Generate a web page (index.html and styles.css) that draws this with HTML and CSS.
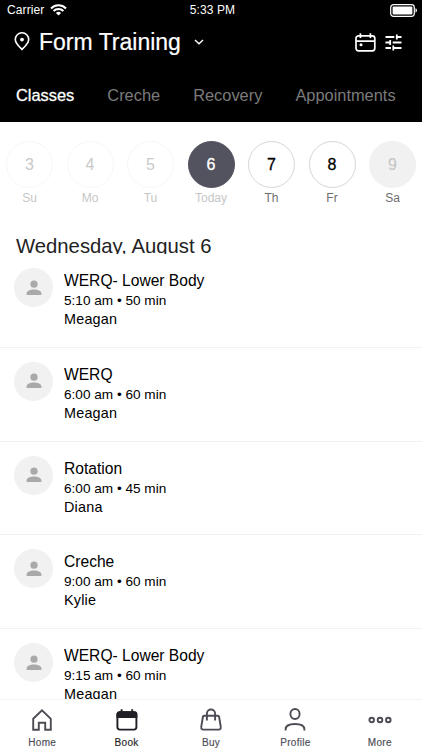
FILE: index.html
```html
<!DOCTYPE html>
<html lang="en">
<head>
    <meta charset="UTF-8">
    <meta name="viewport" content="width=device-width, initial-scale=1.0">
    <title>Form Training</title>
    <link rel="stylesheet" href="styles.css">
</head>
<body>

    <header class="header">
        <div class="status-bar">
            <div class="carrier">
                <span>Carrier</span>
                <svg width="17" height="12" viewBox="0 0 17 12" fill="none" stroke="#fff" stroke-width="2.1">
                    <path d="M1 4.4a10.6 10.6 0 0 1 15 0"/>
                    <path d="M3.6 7.1a6.9 6.9 0 0 1 9.8 0"/>
                    <path d="M8.5 11.6L5.9 9a3.7 3.7 0 0 1 5.2 0z" fill="#fff" stroke="none"/>
                </svg>
            </div>
            <span class="time">5:33 PM</span>
            <svg class="battery" width="28" height="13" viewBox="0 0 28 13">
                <rect x="0.7" y="0.7" width="23.6" height="11.6" rx="2.8" fill="none" stroke="#fff" stroke-width="1.2"/>
                <rect x="2.6" y="2.6" width="19.8" height="7.8" rx="1" fill="#fff"/>
                <path d="M25.5 4.3c1.9.4 1.9 4 0 4.400z" fill="#fff"/>
            </svg>
        </div>

        <div class="title-bar">
            <svg class="pin" width="16" height="19" viewBox="0 0 16 19" fill="none" stroke="#fff" stroke-width="1.6">
                <path d="M8 17.4C5 14.5 1.3 11.3 1.3 7.5a6.7 6.7 0 0 1 13.4 0C14.7 11.3 11 14.5 8 17.4z"/>
                <circle cx="8" cy="7.6" r="1.9" fill="#fff" stroke="none"/>
            </svg>
            <h1>Form Training</h1>
            <svg class="chevron" width="10" height="6" viewBox="0 0 10 6" fill="none" stroke="#fff" stroke-width="1.4">
                <path d="M1 1l4 3.8L9 1"/>
            </svg>
            <div class="actions">
                <svg width="21" height="19" viewBox="0 0 21 19" fill="none" stroke="#fff" stroke-width="1.7">
                    <rect x="1" y="2.8" width="18.8" height="15" rx="2.5"/>
                    <path d="M1 8.2h18.8M5.4 0.3v4.600M15.400 0.3v4.6"/>
                    <circle cx="6" cy="11.8" r="1.5" fill="#fff" stroke="none"/>
                </svg>
                <svg width="17" height="17" viewBox="0 0 17 17" fill="none" stroke="#fff" stroke-width="1.8">
                    <path d="M0.5 3h8.8M11.8 3h4.700M11.8 0.4v5.2M0.5 8.5h4.700M7.7 8.5h8.8M5.2 5.9v5.2M0.5 14h5.5M8.3 14h8.2M8.3 11.4v5.200"/>
                </svg>
            </div>
        </div>

        <nav class="tabs">
            <span class="tab active">Classes</span>
            <span class="tab">Creche</span>
            <span class="tab">Recovery</span>
            <span class="tab">Appointments</span>
        </nav>
    </header>

    <section class="week">
        <div class="day past"><b>3</b><span>Su</span></div>
        <div class="day past"><b>4</b><span>Mo</span></div>
        <div class="day past"><b>5</b><span>Tu</span></div>
        <div class="day today"><b>6</b><span>Today</span></div>
        <div class="day"><b>7</b><span>Th</span></div>
        <div class="day"><b>8</b><span>Fr</span></div>
        <div class="day closed"><b>9</b><span>Sa</span></div>
    </section>

    <main class="schedule">
        <h2>Wednesday, August 6</h2>
        <div id="class-list"></div>
    </main>

    <nav class="bottom-nav">
        <div class="nav-item">
            <svg width="24" height="24" viewBox="0 0 24 24">
                <path d="M3.2 10.8L12 2.400l8.800 8.400v11h-5.600v-7H8.800v7H3.200z"/>
            </svg>
            <span>Home</span>
        </div>
        <div class="nav-item active">
            <svg width="24" height="24" viewBox="0 0 24 24">
                <rect x="2.4" y="4.2" width="19" height="17.4" rx="2.5"/>
                <path d="M2.4 9V6.500a2.300 2.300 0 0 1 2.300-2.300h14.400a2.300 2.300 0 0 1 2.300 2.300V9z" fill="#1f1f25"/>
                <path d="M6.6 1.2v3M17.2 1.2v3"/>
            </svg>
            <span>Book</span>
        </div>
        <div class="nav-item">
            <svg width="24" height="24" viewBox="0 0 24 24">
                <path d="M5.300 7.700h13.400a1.400 1.400 0 0 1 1.400 1.100l1.700 10.400a2 2 0 0 1-2 2.400H4.200a2 2 0 0 1-2-2.400L3.900 8.800a1.400 1.400 0 0 1 1.400-1.100z"/>
                <path d="M7.900 12.500V5.600a4.100 4.100 0 0 1 8.200 0v6.900"/>
            </svg>
            <span>Buy</span>
        </div>
        <div class="nav-item">
            <svg width="24" height="24" viewBox="0 0 24 24">
                <ellipse cx="12" cy="6" rx="4.600" ry="5"/>
                <path d="M2.600 22.500v-1c0-3.400 3-5.500 9.400-5.500s9.400 2.100 9.400 5.500v1"/>
            </svg>
            <span>Profile</span>
        </div>
        <div class="nav-item">
            <svg width="24" height="24" viewBox="0 0 24 24">
                <circle cx="3.700" cy="12" r="2.300"/>
                <circle cx="12" cy="12" r="2.300"/>
                <circle cx="20.300" cy="12" r="2.300"/>
            </svg>
            <span>More</span>
        </div>
    </nav>

    <script>
        const classes = [
            { name: "WERQ- Lower Body", time: "5:10 am", length: 50, coach: "Meagan" },
            { name: "WERQ", time: "6:00 am", length: 60, coach: "Meagan" },
            { name: "Rotation", time: "6:00 am", length: 45, coach: "Diana" },
            { name: "Creche", time: "9:00 am", length: 60, coach: "Kylie" },
            { name: "WERQ- Lower Body", time: "9:15 am", length: 60, coach: "Meagan" }
        ];

        const list = document.getElementById("class-list");

        classes.forEach((item) => {
            const row = document.createElement("div");
            row.className = "class-row";
            row.innerHTML = `
                <div class="avatar">
                    <svg width="16" height="16" viewBox="0 0 16 16" fill="#a9a9a9">
                        <circle cx="8" cy="4.2" r="3.6"/>
                        <path d="M0.6 15v-1.6c0-2.6 4-4 7.4-4s7.4 1.4 7.4 4V15z"/>
                    </svg>
                </div>
                <div class="info">
                    <div class="name">${item.name}</div>
                    <div class="when">${item.time} • ${item.length} min</div>
                    <div class="coach">${item.coach}</div>
                </div>
            `;
            list.appendChild(row);
        });
    </script>

</body>
</html>
```
FILE: styles.css
```css
* {
    box-sizing: border-box;
}
body {
    margin: 0;
    height: 750px;
    display: flex;
    flex-direction: column;
    overflow: hidden;
    background-color: #fff;
    color: #000;
    font-family: "Liberation Sans", Arial, sans-serif;
}
svg {
    display: block;
    flex: none;
}
.header {
    flex: none;
    height: 122px;
    background-color: #000;
    color: #fff;
}
.status-bar {
    display: grid;
    grid-template-columns: 1fr auto 1fr;
    align-items: center;
    height: 20px;
    padding: 0 4px 0 7px;
    font-size: 12px;
    letter-spacing: 0.1px;
}
.carrier {
    display: flex;
    align-items: center;
    gap: 6px;
}
.battery {
    justify-self: end;
}
.title-bar {
    display: flex;
    align-items: center;
    height: 45px;
    padding: 0 20px 0 14px;
}
.pin {
    margin-bottom: 2px;
}
.title-bar h1 {
    margin: 0 0 0 9px;
    font-size: 23px;
    line-height: 27px;
    font-weight: normal;
    -webkit-text-stroke: 0.2px #fff;
}
.chevron {
    margin: 0 0 2px 13px;
}
.actions {
    display: flex;
    align-items: center;
    gap: 9px;
    margin-left: auto;
}
.tabs {
    display: flex;
    gap: 33px;
    padding: 20px 0 0 16px;
    font-size: 16.4px;
    line-height: 20px;
}
.tab {
    color: #7b7b7b;
}
.tab.active {
    color: #fff;
    -webkit-text-stroke: 0.3px #fff;
}
.week {
    flex: none;
    display: flex;
    justify-content: space-between;
    height: 113px;
    padding: 19px 6px 0;
}
.day {
    display: flex;
    flex-direction: column;
    align-items: center;
    width: 47px;
    font-size: 12px;
    color: #6e6e6e;
}
.day b {
    display: flex;
    align-items: center;
    justify-content: center;
    width: 47px;
    height: 47px;
    margin-bottom: 3px;
    border: 1px solid #d6d6d6;
    border-radius: 50%;
    font-size: 16px;
    font-weight: normal;
    color: #000;
    -webkit-text-stroke: 0.3px;
}
.day.past, .day.today {
    color: #c6c6c6;
}
.day.past b {
    border-color: #f7f7f7;
    color: #c9c9c9;
    -webkit-text-stroke: 0;
}
.day.today b {
    border-color: #52535e;
    background-color: #52535e;
    color: #fff;
}
.day.closed b {
    border-color: #f1f1f1;
    background-color: #f1f1f1;
    color: #c4c4c4;
    -webkit-text-stroke: 0;
}
.schedule {
    flex: 1;
    min-height: 0;
    overflow: hidden;
}
.schedule h2 {
    height: 19px;
    margin: 0;
    padding-left: 16px;
    overflow: hidden;
    font-size: 20.3px;
    line-height: 22px;
    font-weight: normal;
    color: #222;
}
.class-row {
    display: flex;
    height: 93.75px;
    padding: 14px 14px 0;
    border-bottom: 1px solid #f2f2f2;
}
.avatar {
    display: flex;
    flex: none;
    align-items: center;
    justify-content: center;
    width: 39px;
    height: 39px;
    margin-right: 11px;
    border-radius: 50%;
    background-color: #f1f1f1;
}
.name {
    margin-top: 3px;
    font-size: 15.6px;
    line-height: 20px;
}
.when {
    font-size: 13.6px;
    line-height: 20px;
}
.coach {
    font-size: 14.4px;
    line-height: 17px;
    letter-spacing: 0.2px;
}
.bottom-nav {
    flex: none;
    display: flex;
    height: 51px;
    border-top: 1px solid #f3f3f3;
    background-color: #fff;
}
.nav-item {
    flex: 1;
    display: flex;
    flex-direction: column;
    align-items: center;
    padding-top: 8px;
    font-size: 10px;
    line-height: 14px;
    letter-spacing: 0.3px;
    color: #4c4c55;
    -webkit-text-stroke: 0.15px;
}
.nav-item svg {
    margin-bottom: 4px;
    fill: none;
    stroke: #4c4c55;
    stroke-width: 1.9;
}
.nav-item.active {
    color: #1f1f25;
}
.nav-item.active svg {
    stroke: #1f1f25;
}
```
